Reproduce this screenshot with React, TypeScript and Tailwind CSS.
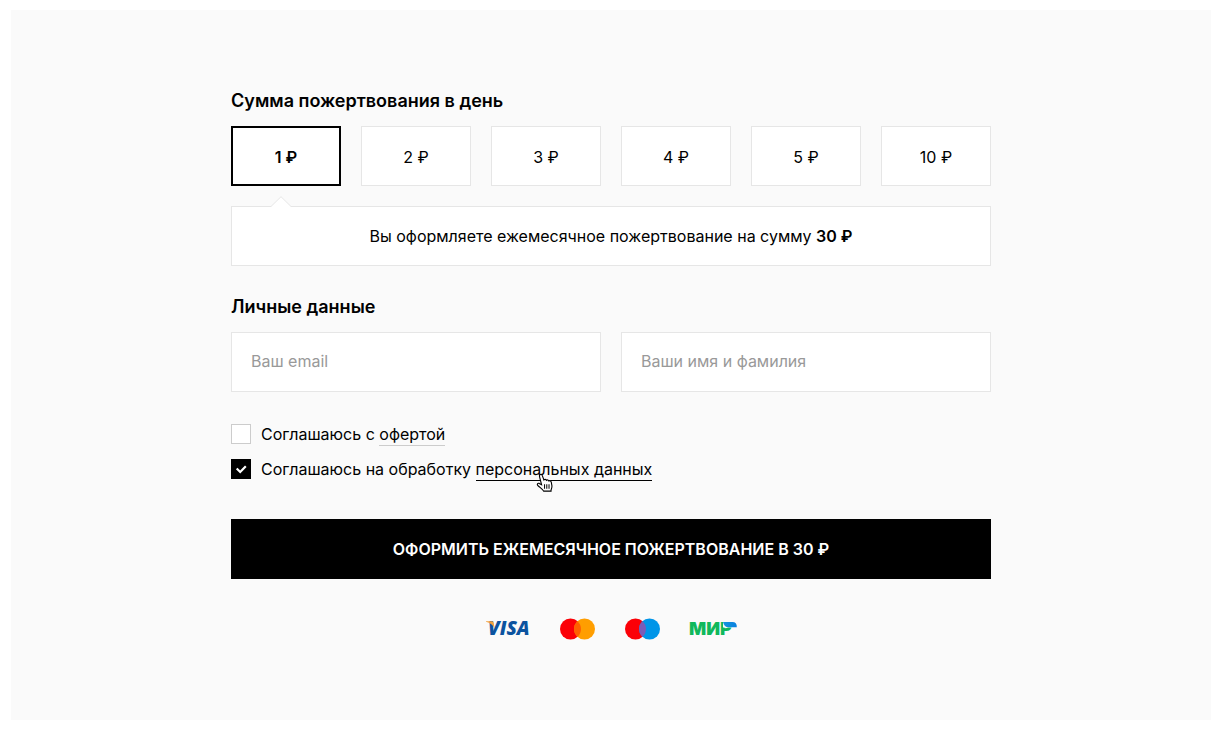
import { useState } from "react";

const amounts = [1, 2, 3, 4, 5, 10];

function Visa() {
  return (
    <svg width="44" height="22" viewBox="0 0 44 22" className="overflow-visible" role="img" aria-label="Visa">
      <text x="2" y="17" fill="#0b539f" fontFamily="Open Sans, sans-serif" fontWeight="800" fontStyle="italic" fontSize="19">
        VISA
      </text>
      <path d="M0 3.300H5.500C6.800 3.300 7.500 3.900 7.700 5L8.600 10.500C7 6.900 4.300 4.600 0 3.700Z" fill="#f2a03c" />
    </svg>
  );
}

function Circles({ right, overlap, label }: { right: string; overlap: string; label: string }) {
  return (
    <svg width="35" height="22" viewBox="0 0 35 22" role="img" aria-label={label}>
      <circle cx="10.500" cy="11" r="10.500" fill="#fb0007" />
      <circle cx="24.500" cy="11" r="10.500" fill={right} />
      <path d="M17.500 3.200A10.500 10.500 0 0 1 17.500 18.800A10.500 10.500 0 0 1 17.500 3.200Z" fill={overlap} />
    </svg>
  );
}

function Mir() {
  return (
    <svg width="47" height="22" viewBox="0 0 47 22" className="overflow-visible" role="img" aria-label="Мир">
      <defs>
        <linearGradient id="mir-blue" x1="0" x2="1" y1="0" y2="0">
          <stop offset="0" stopColor="#1495dc" />
          <stop offset="1" stopColor="#0880e0" />
        </linearGradient>
      </defs>
      <text x="-1" y="17" fill="#10b85c" fontFamily="Inter, sans-serif" fontWeight="900" fontSize="18">
        МИР
      </text>
      <path d="M33 3H47V9.500H33Z" fill="#fafafa" />
      <path d="M33 4H42.500C45.300 4 47 5.800 46.800 9.300H38.500C35.800 9.300 33.700 7.500 33 4Z" fill="url(#mir-blue)" />
    </svg>
  );
}

function HandCursor() {
  return (
    <svg
      aria-hidden="true"
      className="pointer-events-none absolute top-3.5 left-15"
      width="18"
      height="19"
      viewBox="0 0 16 17"
    >
      <path
        d="M3.500 1.500C4.500 0.800 5.300 1.500 5.600 2.400L7 6.200C7.600 5.400 8.900 5.500 9.300 6.500C10 5.900 11.100 6.100 11.500 7.100C12.400 6.700 13.400 7.200 13.600 8.200L14.200 11.500C14.400 13 13.800 14 13.400 15.300V16.200H6.800C6.200 14.800 4 13.400 1.600 11.200C0.500 10.100 1.500 8.800 2.800 9.300L4.900 10.500L3.100 3.300C2.900 2.500 2.900 1.900 3.500 1.500Z"
        fill="#fff"
        stroke="#000"
        strokeWidth="1"
      />
      <path d="M7.600 10V14M9.600 10V14M11.600 10V14" stroke="#000" strokeWidth="0.900" />
    </svg>
  );
}

function Check({
  id,
  checked,
  onChange,
  children,
}: {
  id: string;
  checked: boolean;
  onChange: (v: boolean) => void;
  children: React.ReactNode;
}) {
  return (
    <div className="flex items-center gap-2.5 leading-5">
      <span className="relative flex size-5 shrink-0">
        <input
          id={id}
          type="checkbox"
          checked={checked}
          onChange={(e) => onChange(e.target.checked)}
          className="peer size-5 appearance-none border border-[#cccccc] bg-white checked:border-black checked:bg-black"
        />
        <svg
          aria-hidden="true"
          className="pointer-events-none absolute inset-0 hidden peer-checked:block"
          width="20"
          height="20"
          viewBox="0 0 20 20"
        >
          <path d="M5.700 9.500L9.200 13L14.800 7.200" fill="none" stroke="#fff" strokeWidth="2.200" />
        </svg>
      </span>
      <label htmlFor={id}>{children}</label>
    </div>
  );
}

export default function App() {
  const [amount, setAmount] = useState(1);
  const [offer, setOffer] = useState(false);
  const [personal, setPersonal] = useState(true);
  const total = amount * 30;

  return (
    <div className="bg-white pt-2.5 pr-2 pb-[9px] pl-[11px] font-['Inter',sans-serif] text-base text-black">
      <main className="bg-[#fafafa] px-5 py-20">
        <form className="mx-auto flex max-w-[760px] flex-col" onSubmit={(e) => e.preventDefault()}>
          <h2 className="mb-3.5 text-lg leading-[22px] font-semibold">Сумма пожертвования в день</h2>
          <div className="grid grid-cols-6 gap-5">
            {amounts.map((a) => (
              <button
                key={a}
                type="button"
                aria-pressed={a === amount}
                onClick={() => setAmount(a)}
                className={
                  a === amount
                    ? "relative h-15 border-2 border-black bg-white pt-0.5 font-semibold"
                    : "relative h-15 border border-[#e6e6e6] bg-white pt-0.5"
                }
              >
                {a} ₽
                {a === amount && (
                  <svg
                    aria-hidden="true"
                    className="absolute top-[68px] left-[38px] z-10"
                    width="20"
                    height="11"
                    viewBox="0 0 20 11"
                  >
                    <path d="M0 11V10.500L10 0.700L20 10.500V11Z" fill="#fff" />
                    <path d="M0 10.500L10 0.700L20 10.500" fill="none" stroke="#e6e6e6" />
                  </svg>
                )}
              </button>
            ))}
          </div>
          <p className="mt-5 flex h-15 items-center justify-center border border-[#e6e6e6] bg-white">
            <span>
              Вы оформляете ежемесячное пожертвование на сумму <b className="font-semibold">{total} ₽</b>
            </span>
          </p>

          <h2 className="mt-[30px] mb-3.5 text-lg leading-[22px] font-semibold">Личные данные</h2>
          <div className="grid grid-cols-2 gap-5">
            <input
              type="email"
              aria-label="Ваш email"
              placeholder="Ваш email"
              className="h-15 w-full min-w-0 border border-[#e6e6e6] bg-white px-[19px] pb-0.5 placeholder:text-[#999999]"
            />
            <input
              type="text"
              aria-label="Ваши имя и фамилия"
              placeholder="Ваши имя и фамилия"
              className="h-15 w-full min-w-0 border border-[#e6e6e6] bg-white px-[19px] pb-0.5 placeholder:text-[#999999]"
            />
          </div>

          <div className="mt-8 flex flex-col gap-[15px]">
            <Check id="offer" checked={offer} onChange={setOffer}>
              Соглашаюсь с{" "}
              <a href="#offer" className="border-b border-[#cccccc] pb-px">
                офертой
              </a>
            </Check>
            <Check id="personal" checked={personal} onChange={setPersonal}>
              Соглашаюсь на обработку{" "}
              <a href="#personal" className="relative border-b border-black pb-px">
                персональных данных
                <HandCursor />
              </a>
            </Check>
          </div>

          <button type="submit" className="mt-10 h-15 bg-black font-semibold text-white uppercase">
            Оформить ежемесячное пожертвование в {total} ₽
          </button>

          <div className="mt-[39px] flex items-center justify-center gap-[30px]">
            <Visa />
            <Circles label="Mastercard" right="#ff9e00" overlap="#ff6000" />
            <Circles label="Maestro" right="#0095e8" overlap="#7a5cb8" />
            <Mir />
          </div>
        </form>
      </main>
    </div>
  );
}
